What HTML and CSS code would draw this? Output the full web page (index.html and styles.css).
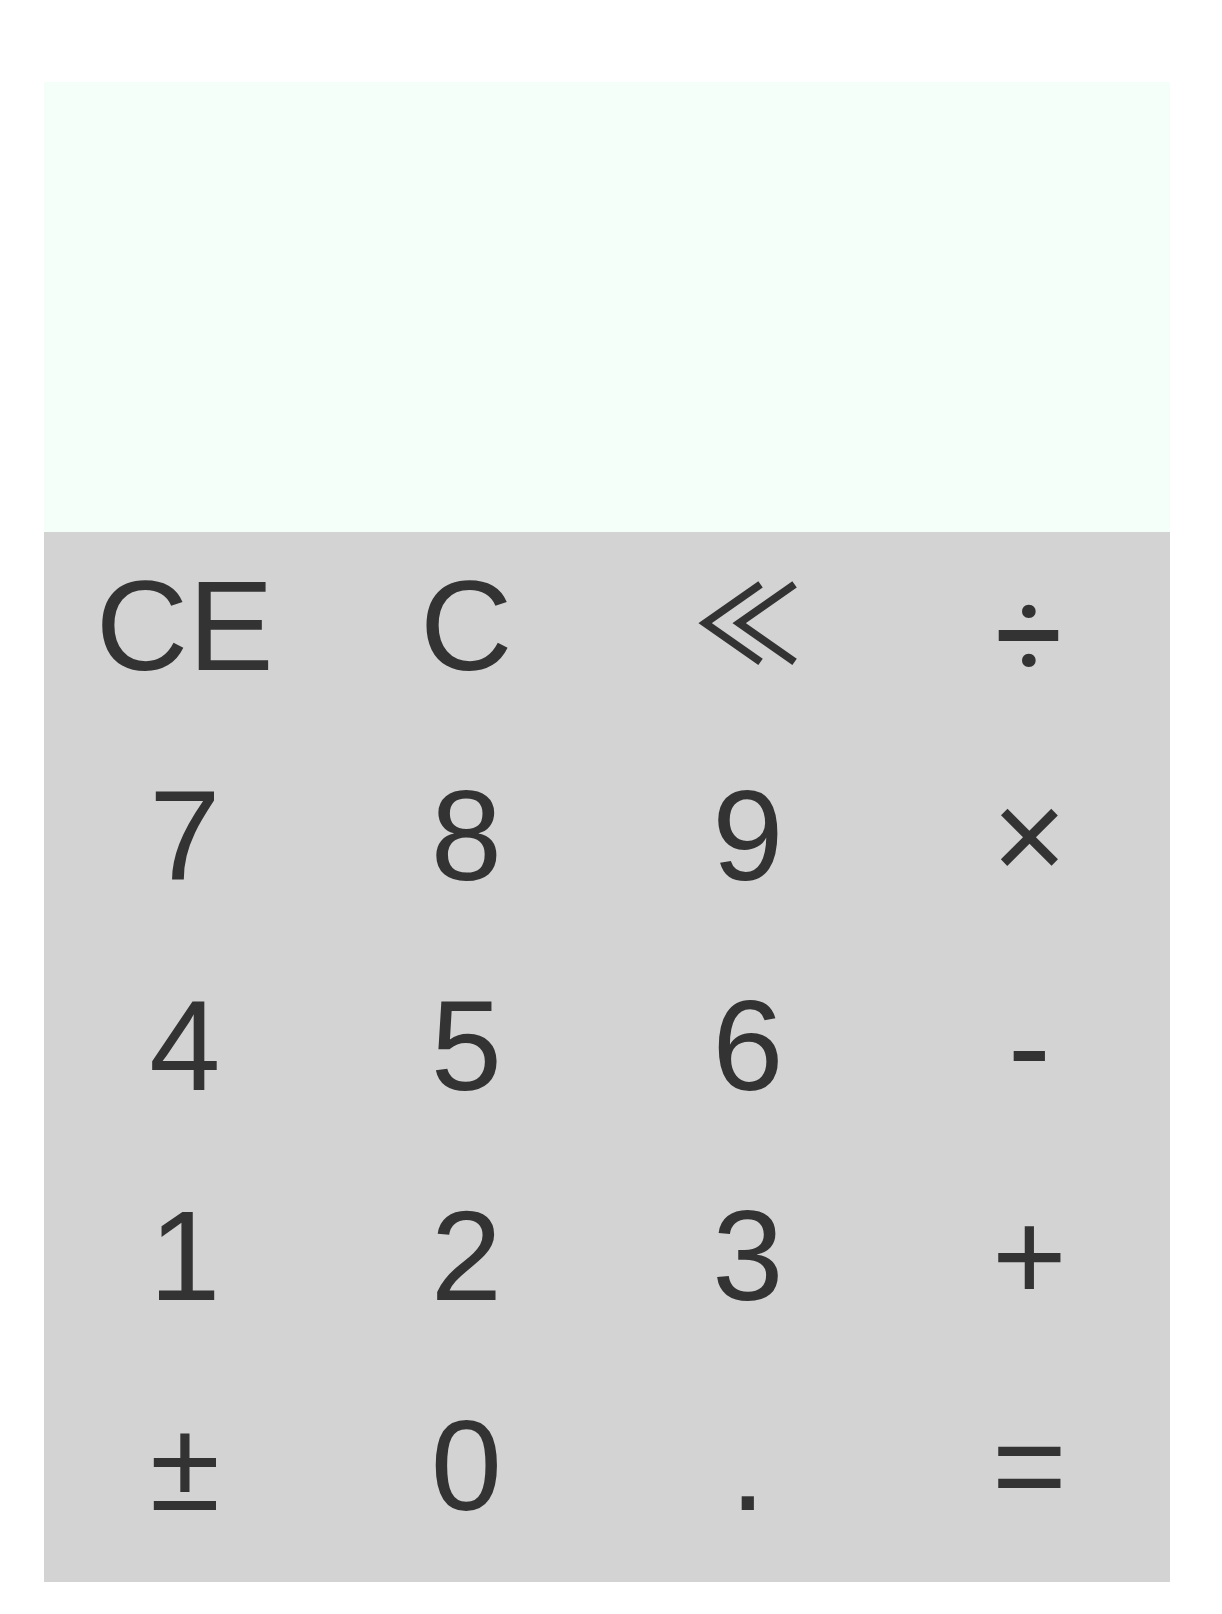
FILE: index.html
```html
<!DOCTYPE html>
<html lang="en">
<head>
<meta charset="utf-8">
<title>Calculator</title>
<link rel="stylesheet" href="styles.css">
</head>
<body>
<div class="calculator">
  <div class="display"></div>
  <div class="keypad">
    <button class="key">CE</button>
    <button class="key">C</button>
    <button class="key key-back">≪</button>
    <button class="key key-div">÷</button>
    <button class="key">7</button>
    <button class="key">8</button>
    <button class="key">9</button>
    <button class="key">×</button>
    <button class="key">4</button>
    <button class="key">5</button>
    <button class="key">6</button>
    <button class="key">-</button>
    <button class="key">1</button>
    <button class="key">2</button>
    <button class="key">3</button>
    <button class="key">+</button>
    <button class="key">±</button>
    <button class="key">0</button>
    <button class="key">.</button>
    <button class="key">=</button>
  </div>
</div>
</body>
</html>
```
FILE: styles.css
```css
html, body {
  margin: 0;
  padding: 0;
  background: #ffffff;
}

.calculator {
  width: 1126px;
  margin: 82px 0 0 44px;
  font-family: "Liberation Sans", Arial, sans-serif;
}

.display {
  height: 450px;
  background: #f5fffa;
}

.keypad {
  display: grid;
  grid-template-columns: repeat(4, 1fr);
  grid-auto-rows: 210px;
  background: #d3d3d3;
}

.key {
  display: flex;
  align-items: center;
  justify-content: center;
  margin: 0;
  padding: 0 0 22px 0;
  border: none;
  background: transparent;
  color: #333333;
  font-family: "Liberation Sans", Arial, sans-serif;
  font-size: 128px;
  line-height: 1.15;
  cursor: pointer;
}

.key-back {
  font-family: "Noto Sans CJK JP", sans-serif;
  font-size: 108px;
  font-weight: 500;
  padding: 0 0 40px 0;
}

.key-div {
  font-family: Roboto, sans-serif;
  font-size: 122px;
  padding: 0 0 2px 0;
}
```
